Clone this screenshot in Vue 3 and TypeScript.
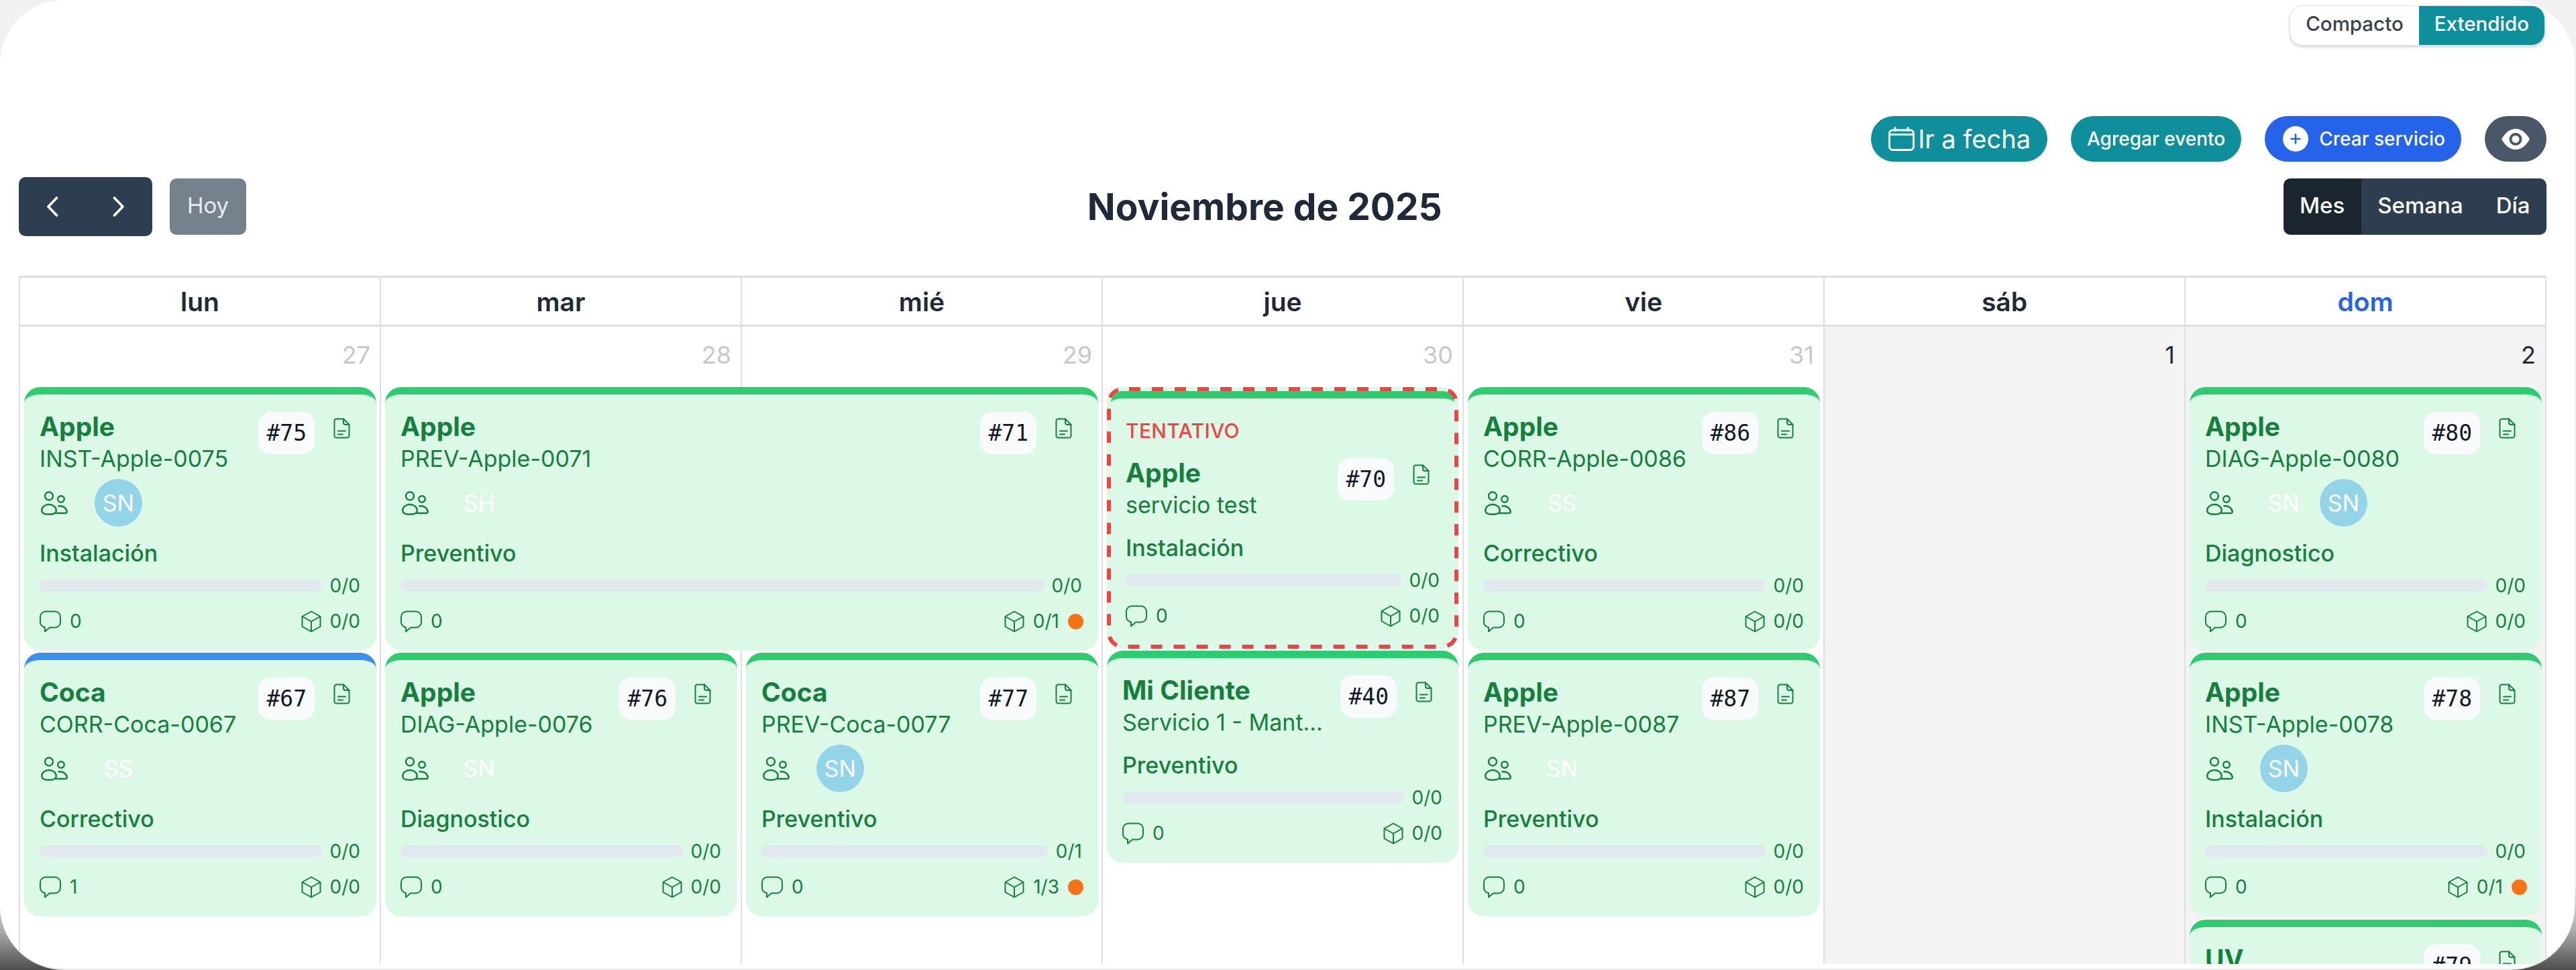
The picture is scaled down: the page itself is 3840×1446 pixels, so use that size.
<script setup lang="ts">
interface Avatar {
  label: string
  filled?: boolean
}

interface CalEvent {
  id: number
  client: string
  sub: string
  kind?: string
  avatars?: Avatar[]
  progress?: string
  comments?: number
  parts?: string
  warn?: boolean
  bar?: string
  tentative?: boolean
}

interface Placed extends CalEvent {
  col: number
  row: number
  span?: number
}

const weekdays = ['lun', 'mar', 'mié', 'jue', 'vie', 'sáb', 'dom']

const days = [
  { num: 27, muted: true },
  { num: 28, muted: true },
  { num: 29, muted: true },
  { num: 30, muted: true },
  { num: 31, muted: true },
  { num: 1, weekend: true },
  { num: 2, weekend: true },
]

const sn: Avatar = { label: 'SN', filled: true }
const ghost = (label: string): Avatar => ({ label })

const placed: Placed[] = [
  { col: 1, row: 2, id: 75, client: 'Apple', sub: 'INST-Apple-0075', avatars: [sn], kind: 'Instalación' },
  { col: 2, row: 2, span: 2, id: 71, client: 'Apple', sub: 'PREV-Apple-0071', avatars: [ghost('SH')], kind: 'Preventivo', parts: '0/1', warn: true },
  { col: 5, row: 2, id: 86, client: 'Apple', sub: 'CORR-Apple-0086', avatars: [ghost('SS')], kind: 'Correctivo' },
  { col: 7, row: 2, id: 80, client: 'Apple', sub: 'DIAG-Apple-0080', avatars: [ghost('SN'), sn], kind: 'Diagnostico' },
  { col: 1, row: 3, id: 67, client: 'Coca', sub: 'CORR-Coca-0067', avatars: [ghost('SS')], kind: 'Correctivo', comments: 1, bar: '#3b8fef' },
  { col: 2, row: 3, id: 76, client: 'Apple', sub: 'DIAG-Apple-0076', avatars: [ghost('SN')], kind: 'Diagnostico' },
  { col: 3, row: 3, id: 77, client: 'Coca', sub: 'PREV-Coca-0077', avatars: [sn], kind: 'Preventivo', progress: '0/1', parts: '1/3', warn: true },
  { col: 5, row: 3, id: 87, client: 'Apple', sub: 'PREV-Apple-0087', avatars: [ghost('SN')], kind: 'Preventivo' },
  { col: 7, row: 3, id: 78, client: 'Apple', sub: 'INST-Apple-0078', avatars: [sn], kind: 'Instalación', parts: '0/1', warn: true },
  { col: 7, row: 4, id: 79, client: 'UV', sub: 'PREV-UV-0079', avatars: [ghost('SN')], kind: 'Preventivo' },
]

// jueves lleva su propia pila porque la tarjeta tentativa mide distinto
const thursday: CalEvent[] = [
  { id: 70, client: 'Apple', sub: 'servicio test', kind: 'Instalación', tentative: true },
  { id: 40, client: 'Mi Cliente', sub: 'Servicio 1 - Mant...', kind: 'Preventivo' },
]

const slot = (e: Placed) => ({
  gridColumn: `${e.col} / span ${e.span ?? 1}`,
  gridRow: `${e.row}`,
})
</script>

<template>
  <div class="window">
    <div class="toggle-row">
      <div class="toggle">
        <span class="toggle-opt">Compacto</span>
        <span class="toggle-opt on">Extendido</span>
      </div>
    </div>

    <div class="actions">
      <button class="pill teal big">
        <svg class="cal-ico" viewBox="0 0 39 36" fill="none" stroke="#fff" stroke-width="3" stroke-linecap="round">
          <rect x="1.5" y="5" width="36" height="29.5" rx="5" />
          <path d="M1.5 11.5h36M10 1.5v4M29 1.5v4" />
        </svg>
        <span>Ir a fecha</span>
      </button>
      <button class="pill teal">Agregar evento</button>
      <button class="pill blue">
        <svg class="plus-ico" viewBox="0 0 38 38">
          <circle cx="19" cy="19" r="19" fill="#fff" />
          <path d="M19 12.5v13M12.5 19h13" stroke="#2563eb" stroke-width="2.6" stroke-linecap="round" />
        </svg>
        <span>Crear servicio</span>
      </button>
      <button class="pill slate">
        <svg class="eye-ico" viewBox="0 0 42 31">
          <path d="M0 15.5C6 5 13 0 21 0s15 5 21 15.5C36 26 29 31 21 31S6 26 0 15.5z" fill="#fff" />
          <circle cx="21" cy="15.5" r="7.5" fill="#fff" stroke="#4a5768" stroke-width="4" />
        </svg>
      </button>
    </div>

    <div class="toolbar">
      <div class="tb-left">
        <div class="nav">
          <button class="nav-btn">
            <svg class="chev" viewBox="0 0 18 30" fill="none" stroke="#fff" stroke-width="3.6" stroke-linecap="round" stroke-linejoin="round">
              <path d="M15.5 2 3 15l12.5 13" />
            </svg>
          </button>
          <button class="nav-btn">
            <svg class="chev" viewBox="0 0 18 30" fill="none" stroke="#fff" stroke-width="3.6" stroke-linecap="round" stroke-linejoin="round">
              <path d="M2.5 2 15 15 2.5 28" />
            </svg>
          </button>
        </div>
        <button class="today">Hoy</button>
      </div>
      <h2 class="title">Noviembre de 2025</h2>
      <div class="views">
        <button class="view active">Mes</button>
        <button class="view">Semana</button>
        <button class="view">Día</button>
      </div>
    </div>

    <div class="calendar">
      <div class="head">
        <div v-for="(d, i) in weekdays" :key="d" class="head-cell" :class="{ sunday: i === 6 }">{{ d }}</div>
      </div>

      <div class="body">
        <div
          v-for="(d, i) in days"
          :key="d.num"
          class="day"
          :class="{ weekend: d.weekend }"
          :style="{ gridColumn: i + 1 }"
        >
          <span class="day-num" :class="{ muted: d.muted }">{{ d.num }}</span>
        </div>

        <template v-for="e in placed" :key="e.id">
          <div class="slot" :class="{ late: e.row === 4 }" :style="slot(e)">
            <div class="card" :style="{ borderTopColor: e.bar }">
              <div class="card-head">
                <div class="names">
                  <div class="client">{{ e.client }}</div>
                  <div class="sub">{{ e.sub }}</div>
                </div>
                <span class="badge">#{{ e.id }}</span>
                <svg class="file-ico" viewBox="0 0 25 31" fill="none" stroke="#15803d" stroke-width="2" stroke-linecap="round" stroke-linejoin="round">
                  <path d="M4.5 1.5H15l8.5 8.5v16.5a3 3 0 0 1-3 3h-16a3 3 0 0 1-3-3v-22a3 3 0 0 1 3-3z" />
                  <path d="M15 1.5V7a3 3 0 0 0 3 3h5.5M7 19.5h11M7 24.5h7" />
                </svg>
              </div>
              <div class="people">
                <svg class="users-ico" viewBox="0 0 40 36" fill="none" stroke="#15803d" stroke-width="2.4" stroke-linejoin="round">
                  <circle cx="12" cy="7.5" r="6" />
                  <circle cx="30" cy="12" r="4.8" />
                  <path d="M12 20C6 20 1.2 24 1.2 29c0 4 5 5.8 10.8 5.8S22.8 33 22.8 29c0-5-4.800-9-10.800-9z" />
                  <path d="M25.500 22.500c7-1.500 12.500 3 13.300 8 .2 1.500-1 2.500-3 2.500H22" />
                </svg>
                <span v-for="(a, i) in e.avatars" :key="i" class="avatar" :class="{ filled: a.filled }">{{ a.label }}</span>
              </div>
              <div class="kind">{{ e.kind }}</div>
              <div class="progress">
                <div class="track"></div>
                <span class="count">{{ e.progress ?? '0/0' }}</span>
              </div>
              <div class="foot">
                <div class="foot-side">
                  <svg class="chat-ico" viewBox="0 0 32 33" fill="none" stroke="#15803d" stroke-width="2" stroke-linejoin="round">
                    <path d="M9 1.500h14a8 8 0 0 1 8 8v8a8 8 0 0 1-8 8H15l-7 6v-6.200a8 8 0 0 1-7-7.800v-8a8 8 0 0 1 8-8z" />
                  </svg>
                  <span class="count">{{ e.comments ?? 0 }}</span>
                </div>
                <div class="foot-side">
                  <svg class="cube-ico" viewBox="0 0 30 33" fill="none" stroke="#15803d" stroke-width="2" stroke-linejoin="round">
                    <path d="M15 1.500 28.500 9v15L15 31.500 1.500 24V9z" />
                    <path d="M1.500 9 15 16.500 28.500 9M15 16.500v15" />
                  </svg>
                  <span class="count">{{ e.parts ?? '0/0' }}</span>
                  <span v-if="e.warn" class="dot"></span>
                </div>
              </div>
            </div>
          </div>
        </template>

        <div class="stack">
          <div v-for="e in thursday" :key="e.id" :class="{ tentative: e.tentative }">
            <div class="card" :class="{ plain: e.tentative }">
              <div v-if="e.tentative" class="tent-label">TENTATIVO</div>
              <div class="card-head">
                <div class="names">
                  <div class="client">{{ e.client }}</div>
                  <div class="sub">{{ e.sub }}</div>
                </div>
                <span class="badge">#{{ e.id }}</span>
                <svg class="file-ico" viewBox="0 0 25 31" fill="none" stroke="#15803d" stroke-width="2" stroke-linecap="round" stroke-linejoin="round">
                  <path d="M4.5 1.5H15l8.5 8.5v16.5a3 3 0 0 1-3 3h-16a3 3 0 0 1-3-3v-22a3 3 0 0 1 3-3z" />
                  <path d="M15 1.5V7a3 3 0 0 0 3 3h5.5M7 19.5h11M7 24.5h7" />
                </svg>
              </div>
              <div class="kind close">{{ e.kind }}</div>
              <div class="progress">
                <div class="track"></div>
                <span class="count">0/0</span>
              </div>
              <div class="foot">
                <div class="foot-side">
                  <svg class="chat-ico" viewBox="0 0 32 33" fill="none" stroke="#15803d" stroke-width="2" stroke-linejoin="round">
                    <path d="M9 1.500h14a8 8 0 0 1 8 8v8a8 8 0 0 1-8 8H15l-7 6v-6.200a8 8 0 0 1-7-7.800v-8a8 8 0 0 1 8-8z" />
                  </svg>
                  <span class="count">0</span>
                </div>
                <div class="foot-side">
                  <svg class="cube-ico" viewBox="0 0 30 33" fill="none" stroke="#15803d" stroke-width="2" stroke-linejoin="round">
                    <path d="M15 1.500 28.500 9v15L15 31.500 1.500 24V9z" />
                    <path d="M1.500 9 15 16.500 28.500 9M15 16.500v15" />
                  </svg>
                  <span class="count">0/0</span>
                </div>
              </div>
            </div>
            <!-- el borde punteado del navegador sale corto, por eso va en svg -->
            <svg v-if="e.tentative" class="dashes"><rect x="3" y="3" rx="21" /></svg>
          </div>
        </div>
      </div>
    </div>
  </div>
</template>

<style scoped>
.window {
  box-sizing: border-box;
  width: 3838px;
  height: 1446px;
  padding-top: 8px;
  background: #fff;
  border-bottom: 2px solid #e9e9e9;
  border-radius: 95px;
  overflow: hidden;
  font-family: Inter, "Liberation Sans", sans-serif;
}

button {
  border: none;
  font-family: inherit;
  cursor: pointer;
}

.toggle-row {
  display: flex;
  justify-content: flex-end;
  padding-right: 44px;
}

.toggle {
  box-sizing: border-box;
  display: flex;
  height: 60px;
  background: #fff;
  border: 1px solid #e2e5ea;
  border-radius: 20px;
  box-shadow: 0 2px 4px rgba(30, 41, 59, 0.22);
  overflow: hidden;
  font-size: 29.5px;
  font-weight: 500;
  color: #374151;
}

.toggle-opt {
  display: flex;
  align-items: center;
  padding: 0 23px 6px;
}

.toggle-opt.on {
  background: #0e8f9b;
  color: #fff;
}

.actions {
  display: flex;
  justify-content: flex-end;
  gap: 35px;
  margin-top: 105px;
  padding-right: 42px;
}

.pill {
  display: flex;
  align-items: center;
  height: 68px;
  padding: 0 24px;
  border-radius: 34px;
  color: #fff;
  font-size: 28px;
  font-weight: 500;
}

.teal {
  background: #0e8f9b;
}

.big {
  padding: 0 25px 0 26px;
  gap: 5px;
  font-size: 38px;
  font-weight: 400;
}

.blue {
  background: #2563eb;
  padding-left: 27px;
  gap: 16px;
}

.slate {
  background: #4a5768;
  padding: 0 25px;
}

.cal-ico {
  width: 39px;
  height: 36px;
}

.plus-ico {
  width: 38px;
  height: 38px;
}

.eye-ico {
  width: 42px;
  height: 31px;
}

.toolbar {
  display: flex;
  align-items: center;
  justify-content: space-between;
  margin-top: 23px;
  padding: 0 42px 0 28px;
}

.tb-left {
  display: flex;
  align-items: center;
  gap: 26px;
}

.nav {
  display: flex;
  height: 88px;
  border-radius: 10px;
  overflow: hidden;
}

.nav-btn {
  width: 99.5px;
  padding: 0;
  background: #2c3e50;
  display: flex;
  align-items: center;
  justify-content: center;
}

.chev {
  width: 18px;
  height: 30px;
}

.today {
  width: 114px;
  height: 84px;
  padding: 0 0 4px;
  border-radius: 10px;
  background: #2c3e50;
  color: #dfe3e7;
  font-size: 33px;
  font-weight: 400;
  opacity: 0.65;
}

.title {
  margin: 0;
  font-size: 55px;
  font-weight: 700;
  color: #1f2937;
}

.views {
  display: flex;
  height: 84px;
  border-radius: 10px;
  overflow: hidden;
}

.view {
  padding: 0 24.5px 4px;
  background: #2c3e50;
  color: #fff;
  font-size: 33px;
  font-weight: 500;
}

.view.active {
  background: #1a252f;
}

.calendar {
  margin: 59px 42px 0 28px;
}

.head {
  display: grid;
  grid-template-columns: repeat(7, 1fr);
  border-top: 3px solid #dedfe1;
  border-bottom: 3px solid #dedfe1;
  border-left: 2px solid #dedfe1;
}

.head-cell {
  display: flex;
  align-items: center;
  justify-content: center;
  height: 70px;
  border-right: 2px solid #dedfe1;
  font-size: 39px;
  font-weight: 600;
  color: #1f2937;
}

.head-cell.sunday {
  color: #2563eb;
}

.body {
  display: grid;
  grid-template-columns: repeat(7, 1fr);
  grid-template-rows: 90px 396px 396px 1fr;
  height: 950px;
  border-left: 2px solid #dedfe1;
  overflow: hidden;
}

.day {
  grid-row: 1 / span 4;
  display: flex;
  justify-content: flex-end;
  padding: 20px 14px 0 0;
  border-right: 2px solid #dedfe1;
}

.day.weekend {
  background: #f3f3f3;
}

.day-num {
  font-size: 36px;
  line-height: 44px;
  color: #1f2937;
}

.day-num.muted {
  color: #c4c8cf;
}

.slot {
  margin: 0 7px 0 6px;
  min-width: 0;
}

.slot.late {
  margin-top: 2px;
}

.stack {
  grid-column: 4;
  grid-row: 2 / span 3;
  display: flex;
  flex-direction: column;
  gap: 3px;
  margin: 0 8px 0 6px;
}

.tentative {
  position: relative;
  padding: 6px;
  border-radius: 24px;
  background: #dcf8e6;
}

.dashes {
  position: absolute;
  top: 0;
  left: 0;
  width: 100%;
  height: 100%;
  pointer-events: none;
}

.dashes rect {
  width: calc(100% - 6px);
  height: calc(100% - 6px);
  fill: none;
  stroke: #ef4444;
  stroke-width: 6;
  stroke-dasharray: 17 17;
  stroke-dashoffset: -9;
}

.card {
  box-sizing: border-box;
  padding: 26px 24px 26px 23px;
  background: #dcf8e6;
  border-top: 11px solid #2ecc71;
  border-radius: 24px;
  color: #15803d;
}

.card.plain {
  padding: 26px 22px 25px;
  border-radius: 18px;
}

.tent-label {
  margin-bottom: 19px;
  font-size: 30px;
  line-height: 44px;
  font-weight: 500;
  letter-spacing: 0.3px;
  color: #ef4444;
}

.card-head {
  display: flex;
  align-items: flex-start;
}

.names {
  flex: 1;
  min-width: 0;
  white-space: nowrap;
}

.client {
  font-size: 39px;
  line-height: 44px;
  font-weight: 700;
}

.sub {
  margin-top: 4px;
  font-size: 34px;
  line-height: 44px;
}

.badge {
  padding: 0 12px;
  height: 63px;
  line-height: 63px;
  background: #f9fafb;
  border-radius: 18px;
  font-family: "DejaVu Sans Mono", "Liberation Mono", monospace;
  font-size: 33px;
  color: #111827;
}

.file-ico {
  flex: none;
  width: 25px;
  height: 31px;
  margin: 9px 15px 0 28px;
}

.people {
  display: flex;
  align-items: center;
  gap: 18px;
  margin-top: 8px;
  height: 71px;
}

.users-ico {
  flex: none;
  width: 40px;
  height: 36px;
  margin: 0 22px 0 2px;
}

.avatar {
  display: flex;
  align-items: center;
  justify-content: center;
  width: 71px;
  height: 71px;
  border-radius: 50%;
  color: #fff;
  font-size: 34px;
}

.avatar.filled {
  background: #93d4e9;
}

.kind {
  margin-top: 20px;
  font-size: 34px;
  line-height: 40px;
  font-weight: 500;
}

.kind.close {
  margin-top: 22px;
}

.progress {
  display: flex;
  align-items: center;
  gap: 12px;
  height: 36px;
  margin-top: 10px;
}

.track {
  flex: 1;
  height: 18px;
  border-radius: 9px;
  background: #e2e8f0;
}

.count {
  font-size: 28px;
  line-height: 36px;
}

.foot {
  display: flex;
  justify-content: space-between;
  height: 36px;
  margin-top: 17px;
}

.foot-side {
  display: flex;
  align-items: center;
  gap: 13px;
}

.chat-ico {
  width: 32px;
  height: 33px;
}

.cube-ico {
  width: 30px;
  height: 33px;
}

.dot {
  width: 23px;
  height: 23px;
  margin-right: -2px;
  border-radius: 50%;
  background: #f97316;
}
</style>

<style>
html,
body {
  margin: 0;
  height: 1446px;
  overflow: hidden;
  background: linear-gradient(#f1f1f1 0, #f1f1f1 1320px, #a8a8a8 1390px, #4d4d4d 1446px);
}
</style>
